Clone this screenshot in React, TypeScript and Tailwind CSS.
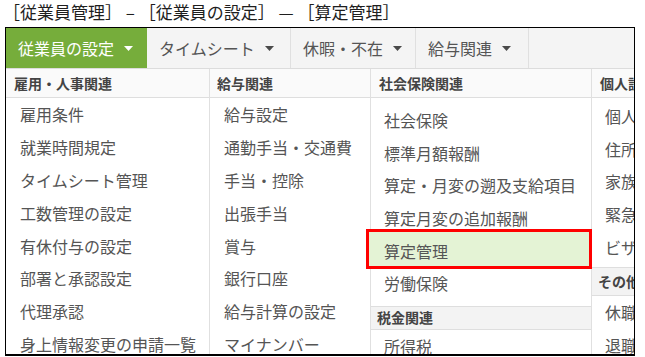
import React from "react";

function Caret({ white }: { white?: boolean }) {
  return (
    <svg width="9" height="5" viewBox="0 0 9 5" className="shrink-0">
      <polygon points="0,0 9,0 4.5,5" fill={white ? "#ffffff" : "#4a4a4a"} />
    </svg>
  );
}

const tabs = [
  { label: "従業員の設定", active: true, w: "w-[141px]" },
  { label: "タイムシート", active: false, w: "w-[144px]" },
  { label: "休暇・不在", active: false, w: "w-[125px]" },
  { label: "給与関連", active: false, w: "w-[113px]" },
];

const col1 = [
  "雇用条件",
  "就業時間規定",
  "タイムシート管理",
  "工数管理の設定",
  "有休付与の設定",
  "部署と承認設定",
  "代理承認",
  "身上情報変更の申請一覧",
];

const col2 = [
  "給与設定",
  "通勤手当・交通費",
  "手当・控除",
  "出張手当",
  "賞与",
  "銀行口座",
  "給与計算の設定",
  "マイナンバー",
];

const col3 = [
  "社会保険",
  "標準月額報酬",
  "算定・月変の遡及支給項目",
  "算定月変の追加報酬",
  "算定管理",
  "労働保険",
];

const col4 = ["個人情報", "住所", "家族", "緊急連絡先", "ビザ"];

function Header({ children, pl }: { children: React.ReactNode; pl: string }) {
  return (
    <div
      className={`h-[29px] shrink-0 border-b border-[#dedede] bg-[#fafafa] flex items-center ${pl} text-[14px] font-bold text-[#444444] whitespace-nowrap`}
    >
      {children}
    </div>
  );
}

function SubHeader({ children, pl, h }: { children: React.ReactNode; pl: string; h: string }) {
  return (
    <div
      className={`${h} shrink-0 border-y border-[#dedede] bg-[#f3f3f3] flex items-center ${pl} text-[14px] font-bold text-[#444444] whitespace-nowrap`}
    >
      {children}
    </div>
  );
}

export default function App() {
  return (
    <div className="w-[645px] h-[357px] bg-white overflow-hidden font-['Noto_Sans_CJK_JP','Noto_Sans',sans-serif]">
      <div className="h-[27px] pl-[3px] text-[17px] leading-[23px] text-[#1e1e1e] whitespace-nowrap">
        ［従業員管理］ – ［従業員の設定］ — ［算定管理］
      </div>
      <div className="ml-[5px] w-[630px] h-[329px] border border-black border-b-2 overflow-hidden flex flex-col">
        {/* nav */}
        <div className="h-[41px] shrink-0 flex bg-[#f4f4f4] border-b border-[#dcdcdc]">
          {tabs.map((t) => (
            <div
              key={t.label}
              className={`${t.w} h-full flex items-center pl-[12px] gap-[10px] border-r whitespace-nowrap text-[16px] ${
                t.active
                  ? "bg-[#76ad3b] text-white border-[#76ad3b]"
                  : "text-[#555555] border-[#e0e0e0]"
              }`}
            >
              <span>{t.label}</span>
              <Caret white={t.active} />
            </div>
          ))}
        </div>
        {/* columns */}
        <div className="flex flex-1 min-h-0 text-[16px] text-[#555555]">
          <div className="w-[204px] shrink-0 border-r border-[#e0e0e0] flex flex-col">
            <Header pl="pl-[8px]">雇用・人事関連</Header>
            {col1.map((s) => (
              <div key={s} className="h-[32.8px] shrink-0 flex items-center pl-[14px] whitespace-nowrap">
                {s}
              </div>
            ))}
          </div>
          <div className="w-[161px] shrink-0 border-r border-[#e0e0e0] flex flex-col">
            <Header pl="pl-[7px]">給与関連</Header>
            {col2.map((s) => (
              <div key={s} className="h-[32.8px] shrink-0 flex items-center pl-[14px] whitespace-nowrap">
                {s}
              </div>
            ))}
          </div>
          <div className="w-[221px] shrink-0 border-r border-[#e0e0e0] flex flex-col">
            <Header pl="pl-[8px]">社会保険関連</Header>
            <div className="h-[6px] shrink-0" />
            {col3.map((s) => (
              <div
                key={s}
                className="relative h-[32.6px] shrink-0 flex items-center pl-[13px] whitespace-nowrap"
              >
                {s === "算定管理" && (
                  <div className="absolute -top-[5px] -bottom-[2px] -left-[5px] -right-[1px] border-[3px] border-[#ff0000] bg-[#e4f3d5]" />
                )}
                <span className="relative">{s}</span>
              </div>
            ))}
            <div className="h-[6px] shrink-0" />
            <SubHeader pl="pl-[6px]" h="h-[24px]">税金関連</SubHeader>
            <div className="h-[33px] shrink-0 flex items-center pl-[13px] whitespace-nowrap">所得税</div>
          </div>
          <div className="flex-1 min-w-0 overflow-hidden flex flex-col">
            <Header pl="pl-[8px]">個人設定</Header>
            <div className="h-[2px] shrink-0" />
            {col4.map((s) => (
              <div key={s} className="h-[32.6px] shrink-0 flex items-center pl-[13px] whitespace-nowrap">
                {s}
              </div>
            ))}
            <div className="h-[4px] shrink-0" />
            <SubHeader pl="pl-[6px]" h="h-[29px]">その他</SubHeader>
            <div className="h-[33px] shrink-0 flex items-center pl-[13px] whitespace-nowrap">休職</div>
            <div className="h-[33px] shrink-0 flex items-center pl-[13px] whitespace-nowrap">退職</div>
          </div>
        </div>
      </div>
    </div>
  );
}
